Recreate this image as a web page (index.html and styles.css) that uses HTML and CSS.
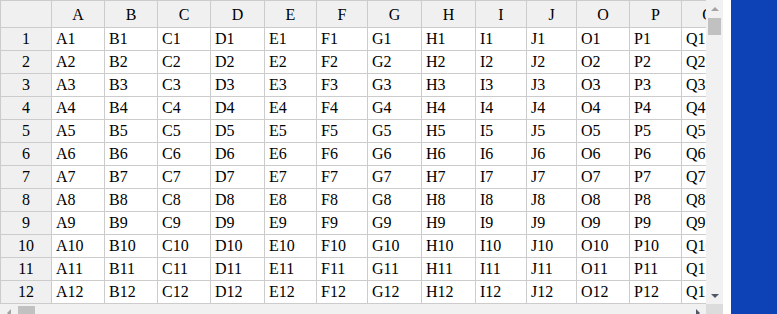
FILE: index.html
```html
<!DOCTYPE html>
<html lang="en">
<head>
<meta charset="utf-8">
<title>Sheet</title>
<link rel="stylesheet" href="styles.css">
</head>
<body>
<div class="page">
  <div class="frame">
    <div class="viewport">
      <div class="grid">
        <div class="hd corner"></div><div class="hd">A</div><div class="hd">B</div><div class="hd">C</div><div class="hd">D</div><div class="hd">E</div><div class="hd">F</div><div class="hd">G</div><div class="hd">H</div><div class="hd">I</div><div class="hd">J</div><div class="hd">O</div><div class="hd">P</div><div class="hd">Q</div>
        <div class="rh">1</div><div class="c">A1</div><div class="c">B1</div><div class="c">C1</div><div class="c">D1</div><div class="c">E1</div><div class="c">F1</div><div class="c">G1</div><div class="c">H1</div><div class="c">I1</div><div class="c">J1</div><div class="c">O1</div><div class="c">P1</div><div class="c">Q1</div>
        <div class="rh">2</div><div class="c">A2</div><div class="c">B2</div><div class="c">C2</div><div class="c">D2</div><div class="c">E2</div><div class="c">F2</div><div class="c">G2</div><div class="c">H2</div><div class="c">I2</div><div class="c">J2</div><div class="c">O2</div><div class="c">P2</div><div class="c">Q2</div>
        <div class="rh">3</div><div class="c">A3</div><div class="c">B3</div><div class="c">C3</div><div class="c">D3</div><div class="c">E3</div><div class="c">F3</div><div class="c">G3</div><div class="c">H3</div><div class="c">I3</div><div class="c">J3</div><div class="c">O3</div><div class="c">P3</div><div class="c">Q3</div>
        <div class="rh">4</div><div class="c">A4</div><div class="c">B4</div><div class="c">C4</div><div class="c">D4</div><div class="c">E4</div><div class="c">F4</div><div class="c">G4</div><div class="c">H4</div><div class="c">I4</div><div class="c">J4</div><div class="c">O4</div><div class="c">P4</div><div class="c">Q4</div>
        <div class="rh">5</div><div class="c">A5</div><div class="c">B5</div><div class="c">C5</div><div class="c">D5</div><div class="c">E5</div><div class="c">F5</div><div class="c">G5</div><div class="c">H5</div><div class="c">I5</div><div class="c">J5</div><div class="c">O5</div><div class="c">P5</div><div class="c">Q5</div>
        <div class="rh">6</div><div class="c">A6</div><div class="c">B6</div><div class="c">C6</div><div class="c">D6</div><div class="c">E6</div><div class="c">F6</div><div class="c">G6</div><div class="c">H6</div><div class="c">I6</div><div class="c">J6</div><div class="c">O6</div><div class="c">P6</div><div class="c">Q6</div>
        <div class="rh">7</div><div class="c">A7</div><div class="c">B7</div><div class="c">C7</div><div class="c">D7</div><div class="c">E7</div><div class="c">F7</div><div class="c">G7</div><div class="c">H7</div><div class="c">I7</div><div class="c">J7</div><div class="c">O7</div><div class="c">P7</div><div class="c">Q7</div>
        <div class="rh">8</div><div class="c">A8</div><div class="c">B8</div><div class="c">C8</div><div class="c">D8</div><div class="c">E8</div><div class="c">F8</div><div class="c">G8</div><div class="c">H8</div><div class="c">I8</div><div class="c">J8</div><div class="c">O8</div><div class="c">P8</div><div class="c">Q8</div>
        <div class="rh">9</div><div class="c">A9</div><div class="c">B9</div><div class="c">C9</div><div class="c">D9</div><div class="c">E9</div><div class="c">F9</div><div class="c">G9</div><div class="c">H9</div><div class="c">I9</div><div class="c">J9</div><div class="c">O9</div><div class="c">P9</div><div class="c">Q9</div>
        <div class="rh">10</div><div class="c">A10</div><div class="c">B10</div><div class="c">C10</div><div class="c">D10</div><div class="c">E10</div><div class="c">F10</div><div class="c">G10</div><div class="c">H10</div><div class="c">I10</div><div class="c">J10</div><div class="c">O10</div><div class="c">P10</div><div class="c">Q10</div>
        <div class="rh">11</div><div class="c">A11</div><div class="c">B11</div><div class="c">C11</div><div class="c">D11</div><div class="c">E11</div><div class="c">F11</div><div class="c">G11</div><div class="c">H11</div><div class="c">I11</div><div class="c">J11</div><div class="c">O11</div><div class="c">P11</div><div class="c">Q11</div>
        <div class="rh">12</div><div class="c">A12</div><div class="c">B12</div><div class="c">C12</div><div class="c">D12</div><div class="c">E12</div><div class="c">F12</div><div class="c">G12</div><div class="c">H12</div><div class="c">I12</div><div class="c">J12</div><div class="c">O12</div><div class="c">P12</div><div class="c">Q12</div>
      </div>
    </div>
    <div class="vbar">
      <div class="btn"><svg width="8" height="4" viewBox="0 0 8 4"><polygon points="0,4 8,4 4,0" class="arrow-off"/></svg></div>
      <div class="vtrack"><div class="vthumb"></div></div>
      <div class="btn"><svg width="8" height="4" viewBox="0 0 8 4"><polygon points="0,0 8,0 4,4" class="arrow-on"/></svg></div>
    </div>
    <div class="hbar">
      <div class="btn"><svg width="4" height="8" viewBox="0 0 4 8"><polygon points="4,0 4,8 0,4" class="arrow-off"/></svg></div>
      <div class="htrack"><div class="hthumb"></div></div>
      <div class="btn"><svg width="4" height="8" viewBox="0 0 4 8"><polygon points="0,0 0,8 4,4" class="arrow-on"/></svg></div>
    </div>
    <div class="sq"></div>
  </div>
  <div class="gutter"></div>
  <div class="blue"></div>
</div>
</body>
</html>
```
FILE: styles.css
```css
html, body {
  margin: 0;
  padding: 0;
  background: #ffffff;
  overflow: hidden;
}
.page {
  display: flex;
  height: 314px;
}
.frame {
  display: grid;
  grid-template-columns: 706px 17px;
  grid-template-rows: 304px 17px;
  flex: none;
}
.viewport {
  overflow: hidden;
  width: 706px;
  height: 304px;
}
.grid {
  display: grid;
  grid-template-columns: 51px 53px 53px 53px 54px 52px 51px 54px 54px 51px 50px 53px 52px 53px;
  grid-template-rows: 27px;
  grid-auto-rows: 23px;
  width: max-content;
  border-left: 1px solid #cccccc;
  border-top: 1px solid #cccccc;
  font-family: "Liberation Serif", "Times New Roman", serif;
  font-size: 16px;
  color: #000000;
}
.grid > div {
  box-sizing: border-box;
  border-right: 1px solid #cccccc;
  border-bottom: 1px solid #cccccc;
  white-space: nowrap;
  overflow: hidden;
}
.hd {
  background: #f0f0f0;
  text-align: center;
  padding-top: 2px;
  line-height: 24px;
}
.rh {
  background: #f0f0f0;
  text-align: center;
  line-height: 21px;
}
.c {
  background: #ffffff;
  padding: 0 4px;
  line-height: 21px;
}
.vbar {
  display: flex;
  flex-direction: column;
  background: #f1f1f1;
}
.hbar {
  display: flex;
  background: #f1f1f1;
}
.btn {
  width: 17px;
  height: 17px;
  flex: none;
  display: flex;
  align-items: center;
  justify-content: center;
}
.btn svg {
  display: block;
}
.vtrack {
  flex: 1;
  padding: 1px 2px 0;
}
.vthumb {
  height: 17px;
  background: #c1c1c1;
}
.htrack {
  flex: 1;
  padding: 2px 0 0 1px;
}
.hthumb {
  width: 17px;
  height: 13px;
  background: #c1c1c1;
}
.arrow-off {
  fill: #a3a3a3;
}
.arrow-on {
  fill: #505868;
}
.sq {
  background: #dcdcdc;
}
.gutter {
  width: 8px;
  flex: none;
}
.blue {
  flex: 1;
  background: #0d41b6;
}
```
